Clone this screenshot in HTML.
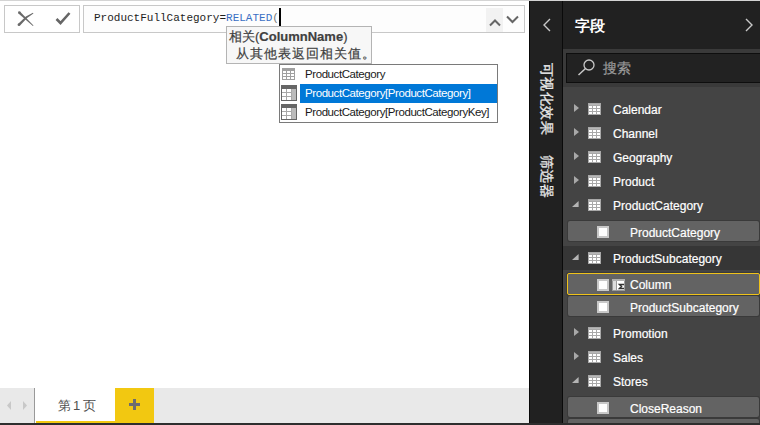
<!DOCTYPE html>
<html><head><meta charset="utf-8">
<style>
*{margin:0;padding:0;box-sizing:border-box}
html,body{width:760px;height:425px;overflow:hidden;background:#fff;font-family:"Liberation Sans",sans-serif}
.a{position:absolute}
#topline{left:0;top:0;width:760px;height:1px;background:#d4d4d4}
#btnbox{left:4px;top:5px;width:76px;height:28px;border:1px solid #c8c8c8;background:#fff}
#fbox{left:83px;top:5px;width:442px;height:28px;border:1px solid #c8c8c8;background:#fdfdfd}
#ftext{left:94px;top:10px;font-family:"Liberation Mono",monospace;font-size:11px;color:#1e1e1e;white-space:pre;line-height:16px}
#ftext .kw{color:#3a6fc4}
#caret{left:279px;top:8px;width:2px;height:18px;background:#000}
#upbtn{left:486px;top:8px;width:17px;height:24px;background:#f2f2f2}
#tip{left:226px;top:26px;width:146px;height:38px;border:1px solid #b4b4b4;background:#f7f7f7;color:#404040;-webkit-text-stroke:0.2px #404040;font-size:13px;line-height:17px;padding:1px 0 0 2px;white-space:nowrap}
#ac{left:279px;top:64px;width:219px;height:59px;border:1px solid #7a7a7a;background:#fff}
.acrow{position:absolute;left:0;height:19px;width:217px;font-size:11.5px;line-height:19.5px;color:#1a1a1a;white-space:nowrap;letter-spacing:-0.42px}
.acrow span{position:absolute;left:25px;top:0}
.acsel{position:absolute;left:20px;top:0;width:197px;height:19px;background:#0078d7}
/* dark panel */
#dark{left:529px;top:1px;width:231px;height:422px;background:#212121}
#dline1{left:529px;top:1px;width:1px;height:422px;background:#080808}
#dline2{left:562px;top:1px;width:1px;height:422px;background:#0a0a0a}
#title{left:575px;top:15.5px;color:#fff;font-size:15px;font-weight:bold;line-height:20px}
#band{left:563px;top:49px;width:197px;height:38px;background:#3a3a3a}
#search{left:566px;top:53px;width:200px;height:30px;background:#222;border:1px solid #0e0e0e}
#stext{left:603px;top:59px;color:#9a9a9a;font-size:14px;line-height:18px;-webkit-text-stroke:0.2px #9a9a9a}
#list{left:563px;top:87px;width:197px;height:336px;background:#444}
.row{position:absolute;left:0;color:#fff;font-size:12px;white-space:nowrap;-webkit-text-stroke:0.2px #fff}
.item{position:absolute;background:#636363;border-radius:2px;box-shadow:0 0 0 1px #3a3a3a}
#bottom{left:0;top:423px;width:760px;height:2px;background:#2e2e2e}
#tabbar{left:0;top:388px;width:529px;height:35px;background:#e9e9e9}
#navsep{left:34px;top:388px;width:1px;height:35px;background:#999}
#tab{left:35px;top:388px;width:80px;height:35px;background:#fff}
#tabul{left:36px;top:421px;width:79px;height:2px;background:#f2c811}
#plus{left:115px;top:388px;width:39px;height:35px;background:#f2c811}
#tabtext{left:57.5px;top:397px;font-size:13px;color:#505050;line-height:17px;letter-spacing:-0.6px;white-space:nowrap}
.vt{position:absolute;color:#e8e8e8;font-size:14px;letter-spacing:0.4px;line-height:16px;white-space:nowrap;transform-origin:0 0;transform:rotate(90deg);-webkit-text-stroke:0.3px #e8e8e8}
</style></head>
<body>
<div class="a" id="topline"></div>
<div class="a" id="btnbox"></div>
<svg class="a" style="left:16.8px;top:11px" width="18" height="17" viewBox="0 0 18 17"><g fill="#6a6a6a"><path d="M1.41 2.55 L3.19 0.65 L16.47 14.41 L15.93 14.99 Z"/><circle cx="2.3" cy="1.6" r="1.3"/><path d="M0.98 12.88 L8.86 5.47 L15.99 1.86 L16.41 2.54 L10.08 7.05 L2.82 14.72 Z"/><circle cx="1.9" cy="13.8" r="1.3"/></g></svg>
<svg class="a" style="left:55px;top:11px" width="17" height="15" viewBox="0 0 17 15">
  <path d="M1.5 8 L5.5 12 L14.5 2" stroke="#666" stroke-width="2.6" fill="none"/>
</svg>
<div class="a" id="fbox"></div>
<div class="a" id="ftext">ProductFullCategory=<span class="kw">RELATED</span><span style="color:#777">(</span></div>
<div class="a" id="caret"></div>
<div class="a" id="upbtn"></div>
<svg class="a" style="left:489px;top:18px" width="12" height="9" viewBox="0 0 12 9">
  <path d="M1 7.5 L6 2.5 L11 7.5" stroke="#666" stroke-width="2" fill="none"/>
</svg>
<svg class="a" style="left:506px;top:15px" width="13" height="9" viewBox="0 0 13 9">
  <path d="M1 1.5 L6.5 7 L12 1.5" stroke="#666" stroke-width="2" fill="none"/>
</svg>

<div class="a" id="tip">相关(<b>ColumnName</b>)<br><span style="margin-left:7px;letter-spacing:1px;font-weight:500">从其他表返回相关值。</span></div>

<div class="a" id="ac">
  <div class="acrow" style="top:0"><svg class="a" style="left:2px;top:3px" width="13" height="12"><rect width="13" height="12" fill="#a0a0a0"/><g fill="#fff"><rect x="1" y="3" width="3" height="2"/><rect x="5" y="3" width="3" height="2"/><rect x="9" y="3" width="3" height="2"/><rect x="1" y="6" width="3" height="2"/><rect x="5" y="6" width="3" height="2"/><rect x="9" y="6" width="3" height="2"/><rect x="1" y="9" width="3" height="2"/><rect x="5" y="9" width="3" height="2"/><rect x="9" y="9" width="3" height="2"/></g></svg><span>ProductCategory</span></div>
  <div class="acrow" style="top:19px"><div class="acsel"></div><svg class="a" style="left:1px;top:1px" width="16" height="16"><rect width="16" height="16" fill="#666"/><rect x="1" y="4" width="14" height="11" fill="#a8a8a8"/><g fill="#fff"><rect x="1" y="4" width="4" height="3"/><rect x="6" y="4" width="4" height="3"/><rect x="1" y="8" width="4" height="3"/><rect x="6" y="8" width="4" height="3"/><rect x="1" y="12" width="4" height="3"/><rect x="6" y="12" width="4" height="3"/></g><rect x="11" y="4" width="4" height="11" fill="#bbb"/></svg><span style="color:#fff">ProductCategory[ProductCategory]</span></div>
  <div class="acrow" style="top:38px"><svg class="a" style="left:1px;top:1px" width="16" height="16"><rect width="16" height="16" fill="#666"/><rect x="1" y="4" width="14" height="11" fill="#a8a8a8"/><g fill="#fff"><rect x="1" y="4" width="4" height="3"/><rect x="6" y="4" width="4" height="3"/><rect x="1" y="8" width="4" height="3"/><rect x="6" y="8" width="4" height="3"/><rect x="1" y="12" width="4" height="3"/><rect x="6" y="12" width="4" height="3"/></g><rect x="11" y="4" width="4" height="11" fill="#bbb"/></svg><span>ProductCategory[ProductCategoryKey]</span></div>
</div>

<div class="a" id="tabbar"></div>
<svg class="a" style="left:5px;top:400px" width="24" height="11"><path d="M6 1 L2 5.5 L6 10Z" fill="#c8c8c8"/><path d="M18 1 L22 5.5 L18 10Z" fill="#c8c8c8"/></svg>
<div class="a" id="navsep"></div>
<div class="a" id="tab"></div>
<div class="a" id="tabul"></div>
<div class="a" id="tabtext">第 1 页</div>
<div class="a" id="plus"></div>
<svg class="a" style="left:129px;top:399px" width="11" height="11"><path d="M5.5 0v11M0 5.5h11" stroke="#6c6c70" stroke-width="3"/></svg>

<div class="a" id="dark"></div>
<div class="a" id="dline1"></div>
<div class="a" id="dline2"></div>
<svg class="a" style="left:542px;top:18px" width="10" height="14"><path d="M8 1 L2 7 L8 13" stroke="#c8c8c8" stroke-width="1.4" fill="none"/></svg>
<div class="vt" style="left:555px;top:63px">可视化效果</div>
<div class="vt" style="left:555px;top:155px">筛选器</div>
<div class="a" id="title">字段</div>
<svg class="a" style="left:744px;top:18px" width="10" height="14"><path d="M2 1 L8 7 L2 13" stroke="#c8c8c8" stroke-width="1.4" fill="none"/></svg>
<div class="a" id="band"></div>
<div class="a" id="search"></div>
<svg class="a" style="left:577px;top:59px" width="19" height="17"><circle cx="12" cy="6" r="5" stroke="#c8c8c8" stroke-width="1.3" fill="none"/><path d="M8.5 9.5 L1.5 16" stroke="#c8c8c8" stroke-width="1.5"/></svg>
<div class="a" id="stext">搜索</div>
<div class="a" id="list"></div>
<!--LIST-->
<svg class="a" style="left:574px;top:104px" width="5" height="8"><path d="M0 0 L5 4 L0 8Z" fill="#a8a8a8"/></svg>
<svg class="a" style="left:588px;top:103px" width="13" height="12"><rect width="13" height="12" fill="#a9a9a9"/><g fill="#fff"><rect x="1" y="3" width="3" height="2"/><rect x="5" y="3" width="3" height="2"/><rect x="9" y="3" width="3" height="2"/><rect x="1" y="6" width="3" height="2"/><rect x="5" y="6" width="3" height="2"/><rect x="9" y="6" width="3" height="2"/><rect x="1" y="9" width="3" height="2"/><rect x="5" y="9" width="3" height="2"/><rect x="9" y="9" width="3" height="2"/></g><rect x="1" y="1" width="11" height="1" fill="#b8b8b8"/></svg>
<div class="row" style="left:613px;top:102px;line-height:16px">Calendar</div>
<svg class="a" style="left:574px;top:128px" width="5" height="8"><path d="M0 0 L5 4 L0 8Z" fill="#a8a8a8"/></svg>
<svg class="a" style="left:588px;top:127px" width="13" height="12"><rect width="13" height="12" fill="#a9a9a9"/><g fill="#fff"><rect x="1" y="3" width="3" height="2"/><rect x="5" y="3" width="3" height="2"/><rect x="9" y="3" width="3" height="2"/><rect x="1" y="6" width="3" height="2"/><rect x="5" y="6" width="3" height="2"/><rect x="9" y="6" width="3" height="2"/><rect x="1" y="9" width="3" height="2"/><rect x="5" y="9" width="3" height="2"/><rect x="9" y="9" width="3" height="2"/></g><rect x="1" y="1" width="11" height="1" fill="#b8b8b8"/></svg>
<div class="row" style="left:613px;top:126px;line-height:16px">Channel</div>
<svg class="a" style="left:574px;top:152px" width="5" height="8"><path d="M0 0 L5 4 L0 8Z" fill="#a8a8a8"/></svg>
<svg class="a" style="left:588px;top:151px" width="13" height="12"><rect width="13" height="12" fill="#a9a9a9"/><g fill="#fff"><rect x="1" y="3" width="3" height="2"/><rect x="5" y="3" width="3" height="2"/><rect x="9" y="3" width="3" height="2"/><rect x="1" y="6" width="3" height="2"/><rect x="5" y="6" width="3" height="2"/><rect x="9" y="6" width="3" height="2"/><rect x="1" y="9" width="3" height="2"/><rect x="5" y="9" width="3" height="2"/><rect x="9" y="9" width="3" height="2"/></g><rect x="1" y="1" width="11" height="1" fill="#b8b8b8"/></svg>
<div class="row" style="left:613px;top:150px;line-height:16px">Geography</div>
<svg class="a" style="left:574px;top:176px" width="5" height="8"><path d="M0 0 L5 4 L0 8Z" fill="#a8a8a8"/></svg>
<svg class="a" style="left:588px;top:175px" width="13" height="12"><rect width="13" height="12" fill="#a9a9a9"/><g fill="#fff"><rect x="1" y="3" width="3" height="2"/><rect x="5" y="3" width="3" height="2"/><rect x="9" y="3" width="3" height="2"/><rect x="1" y="6" width="3" height="2"/><rect x="5" y="6" width="3" height="2"/><rect x="9" y="6" width="3" height="2"/><rect x="1" y="9" width="3" height="2"/><rect x="5" y="9" width="3" height="2"/><rect x="9" y="9" width="3" height="2"/></g><rect x="1" y="1" width="11" height="1" fill="#b8b8b8"/></svg>
<div class="row" style="left:613px;top:174px;line-height:16px">Product</div>
<svg class="a" style="left:572px;top:201px" width="7" height="6"><path d="M6.6 0 L6.6 6 L0 6Z" fill="#b4b4b4"/></svg>
<svg class="a" style="left:588px;top:199px" width="13" height="12"><rect width="13" height="12" fill="#a9a9a9"/><g fill="#fff"><rect x="1" y="3" width="3" height="2"/><rect x="5" y="3" width="3" height="2"/><rect x="9" y="3" width="3" height="2"/><rect x="1" y="6" width="3" height="2"/><rect x="5" y="6" width="3" height="2"/><rect x="9" y="6" width="3" height="2"/><rect x="1" y="9" width="3" height="2"/><rect x="5" y="9" width="3" height="2"/><rect x="9" y="9" width="3" height="2"/></g><rect x="1" y="1" width="11" height="1" fill="#b8b8b8"/></svg>
<div class="row" style="left:613px;top:198px;line-height:16px">ProductCategory</div>
<div class="item" style="left:568px;top:221px;width:191px;height:20px;"></div>
<div class="a" style="left:597px;top:226px;width:12px;height:12px;background:#fff;border:2px solid #c8c8c8"></div>
<div class="row" style="left:630px;top:225px;line-height:16px">ProductCategory</div>
<div class="a" style="left:563px;top:246px;width:197px;height:24px;background:#363636"></div>
<svg class="a" style="left:572px;top:254px" width="7" height="6"><path d="M6.6 0 L6.6 6 L0 6Z" fill="#b4b4b4"/></svg>
<svg class="a" style="left:588px;top:252px" width="13" height="12"><rect width="13" height="12" fill="#a9a9a9"/><g fill="#fff"><rect x="1" y="3" width="3" height="2"/><rect x="5" y="3" width="3" height="2"/><rect x="9" y="3" width="3" height="2"/><rect x="1" y="6" width="3" height="2"/><rect x="5" y="6" width="3" height="2"/><rect x="9" y="6" width="3" height="2"/><rect x="1" y="9" width="3" height="2"/><rect x="5" y="9" width="3" height="2"/><rect x="9" y="9" width="3" height="2"/></g><rect x="1" y="1" width="11" height="1" fill="#b8b8b8"/></svg>
<div class="row" style="left:613px;top:251px;line-height:16px">ProductSubcategory</div>
<div class="item" style="left:567px;top:273px;width:193px;height:22px;border:1px solid #efc21a;"></div>
<div class="a" style="left:597px;top:279px;width:12px;height:12px;background:#fff;border:2px solid #c8c8c8"></div>
<svg class="a" style="left:612px;top:279px" width="13" height="12"><rect width="13" height="12" fill="#9a9a9a"/><rect width="13" height="2" fill="#b0b0b0"/><rect x="1" y="2" width="3" height="9" fill="#dedede"/><rect x="5" y="2" width="7" height="9" fill="#fff"/><path d="M12 5.5 H7.5 L9.5 7.5 L7.5 9.5 H12" stroke="#333" stroke-width="1.5" fill="none"/></svg>
<div class="row" style="left:630px;top:277px;line-height:16px">Column</div>
<div class="item" style="left:568px;top:296px;width:191px;height:20px;"></div>
<div class="a" style="left:597px;top:301px;width:12px;height:12px;background:#fff;border:2px solid #c8c8c8"></div>
<div class="row" style="left:630px;top:300px;line-height:16px">ProductSubcategory</div>
<svg class="a" style="left:574px;top:328px" width="5" height="8"><path d="M0 0 L5 4 L0 8Z" fill="#a8a8a8"/></svg>
<svg class="a" style="left:588px;top:327px" width="13" height="12"><rect width="13" height="12" fill="#a9a9a9"/><g fill="#fff"><rect x="1" y="3" width="3" height="2"/><rect x="5" y="3" width="3" height="2"/><rect x="9" y="3" width="3" height="2"/><rect x="1" y="6" width="3" height="2"/><rect x="5" y="6" width="3" height="2"/><rect x="9" y="6" width="3" height="2"/><rect x="1" y="9" width="3" height="2"/><rect x="5" y="9" width="3" height="2"/><rect x="9" y="9" width="3" height="2"/></g><rect x="1" y="1" width="11" height="1" fill="#b8b8b8"/></svg>
<div class="row" style="left:613px;top:326px;line-height:16px">Promotion</div>
<svg class="a" style="left:574px;top:352px" width="5" height="8"><path d="M0 0 L5 4 L0 8Z" fill="#a8a8a8"/></svg>
<svg class="a" style="left:588px;top:351px" width="13" height="12"><rect width="13" height="12" fill="#a9a9a9"/><g fill="#fff"><rect x="1" y="3" width="3" height="2"/><rect x="5" y="3" width="3" height="2"/><rect x="9" y="3" width="3" height="2"/><rect x="1" y="6" width="3" height="2"/><rect x="5" y="6" width="3" height="2"/><rect x="9" y="6" width="3" height="2"/><rect x="1" y="9" width="3" height="2"/><rect x="5" y="9" width="3" height="2"/><rect x="9" y="9" width="3" height="2"/></g><rect x="1" y="1" width="11" height="1" fill="#b8b8b8"/></svg>
<div class="row" style="left:613px;top:350px;line-height:16px">Sales</div>
<svg class="a" style="left:572px;top:377px" width="7" height="6"><path d="M6.6 0 L6.6 6 L0 6Z" fill="#b4b4b4"/></svg>
<svg class="a" style="left:588px;top:375px" width="13" height="12"><rect width="13" height="12" fill="#a9a9a9"/><g fill="#fff"><rect x="1" y="3" width="3" height="2"/><rect x="5" y="3" width="3" height="2"/><rect x="9" y="3" width="3" height="2"/><rect x="1" y="6" width="3" height="2"/><rect x="5" y="6" width="3" height="2"/><rect x="9" y="6" width="3" height="2"/><rect x="1" y="9" width="3" height="2"/><rect x="5" y="9" width="3" height="2"/><rect x="9" y="9" width="3" height="2"/></g><rect x="1" y="1" width="11" height="1" fill="#b8b8b8"/></svg>
<div class="row" style="left:613px;top:374px;line-height:16px">Stores</div>
<div class="item" style="left:568px;top:397px;width:191px;height:20px;"></div>
<div class="a" style="left:597px;top:402px;width:12px;height:12px;background:#fff;border:2px solid #c8c8c8"></div>
<div class="row" style="left:630px;top:401px;line-height:16px">CloseReason</div>
<div class="item" style="left:568px;top:419px;width:191px;height:20px;"></div>
<!--/LIST-->
<div class="a" id="bottom"></div>
</body></html>
